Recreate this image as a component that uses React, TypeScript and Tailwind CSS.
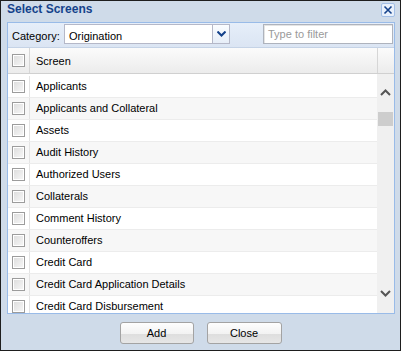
const screens = [
  "Applicants",
  "Applicants and Collateral",
  "Assets",
  "Audit History",
  "Authorized Users",
  "Collaterals",
  "Comment History",
  "Counteroffers",
  "Credit Card",
  "Credit Card Application Details",
  "Credit Card Disbursement",
];

function Check() {
  return (
    <span className="block h-[13px] w-[13px] border border-[#9c9c9c] bg-gradient-to-br from-[#dcdcdc] to-[#f8f8f8] shadow-[inset_0_0_0_1px_#fff]" />
  );
}

function Chevron({ up }: { up?: boolean }) {
  return (
    <svg width="11" height="7" viewBox="0 0 11 7" className="text-[#555]">
      <path
        d={up ? "M1 6 L5.5 1.5 L10 6" : "M1 1 L5.5 5.5 L10 1"}
        fill="none"
        stroke="currentColor"
        strokeWidth="2"
      />
    </svg>
  );
}

export default function App() {
  return (
    <div className="flex h-[351px] w-[401px] flex-col border border-[#1e1e1e] bg-[#cfdbe9] font-['Liberation_Sans',Arial,sans-serif] text-[11px] text-black">
      {/* title bar */}
      <div className="flex h-[21px] items-start justify-between pl-[6px] pr-[5px]">
        <span className="mt-px text-[12px] leading-[14px] font-bold text-[#15428b]">Select Screens</span>
        <button className="mt-[2px] flex h-[14px] w-[14px] items-center justify-center rounded-[2px] border border-[#a3bfe6] bg-[#e8f0fb]">
          <svg width="10" height="10" viewBox="0 0 10 10">
            <path d="M1.5 1.5 L8.5 8.5 M8.5 1.5 L1.5 8.5" stroke="#15428b" strokeWidth="1.6" />
          </svg>
        </button>
      </div>

      {/* panel */}
      <div className="mx-[5px] ml-[6px] flex h-[292px] flex-col overflow-hidden border border-[#99bbe8] bg-white">
        <div className="flex h-[25px] shrink-0 items-start border-b border-[#c5d3e6] bg-gradient-to-b from-[#e6eef9] to-[#dbe5f3] pt-px">
          <span className="ml-[4px] mt-[4px] w-[52px]">Category:</span>
          <div className="flex h-[20px] w-[166px] border border-[#b5b8c8] bg-white">
            <span className="flex-1 pl-[4px] pt-[3px]">Origination</span>
            <span className="flex w-[17px] items-center justify-center border-l border-[#b5b8c8] bg-gradient-to-b from-[#fbfdff] to-[#e7eef8]">
              <svg width="9" height="6" viewBox="0 0 9 6">
                <path d="M0.5 0.5 L4.5 4.5 L8.5 0.5" fill="none" stroke="#15428b" strokeWidth="2" />
              </svg>
            </span>
          </div>
          <div className="ml-auto mr-px flex h-[20px] w-[130px] items-center border border-[#aeb3bd] bg-white pl-[4px] text-[#9a9a9a] shadow-[inset_1px_1px_0_#e4e4e4]">
            Type to filter
          </div>
        </div>

        {/* header */}
        <div className="flex h-[26px] shrink-0 border-b border-[#d0d0d0] bg-gradient-to-b from-[#fbfbfb] to-[#ececec]">
          <div className="flex w-[22px] items-center justify-center border-r border-[#d6d6d6]">
            <Check />
          </div>
          <div className="flex flex-1 items-center pl-[6px] pt-px">Screen</div>
          <div className="w-[17px] border-l border-[#d6d6d6]" />
        </div>

        {/* body */}
        <div className="flex min-h-0 flex-1">
          <div className="flex min-w-0 flex-1 flex-col overflow-hidden pt-[2px]">
            {screens.map((s, i) => (
              <div
                key={s}
                className={`flex h-[22px] shrink-0 border-b border-[#ececec] ${i % 2 ? "bg-[#f7f7f7]" : "bg-white"}`}
              >
                <div className="flex w-[22px] items-center justify-center border-r border-[#e3e3e3]">
                  <Check />
                </div>
                <div className="flex items-center pl-[6px]">{s}</div>
              </div>
            ))}
          </div>
          <div className="flex w-[17px] shrink-0 flex-col items-center bg-[#f0f0f0]">
            <div className="mt-[15px]">
              <Chevron up />
            </div>
            <div className="mt-[16px] h-[14px] w-[15px] bg-[#cdcdcd]" />
            <div className="mt-auto mb-[16px]">
              <Chevron />
            </div>
          </div>
        </div>
      </div>

      {/* buttons */}
      <div className="flex flex-1 items-start justify-center gap-[13px] pt-[8px]">
        <button className="h-[22px] w-[74px] rounded-[3px] border border-[#a3a3a3] bg-[linear-gradient(#fefefe_0%,#f2f2f2_55%,#dedede_56%,#e6e6e6_100%)]">
          Add
        </button>
        <button className="h-[22px] w-[75px] rounded-[3px] border border-[#a3a3a3] bg-[linear-gradient(#fefefe_0%,#f2f2f2_55%,#dedede_56%,#e6e6e6_100%)]">
          Close
        </button>
      </div>
    </div>
  );
}
